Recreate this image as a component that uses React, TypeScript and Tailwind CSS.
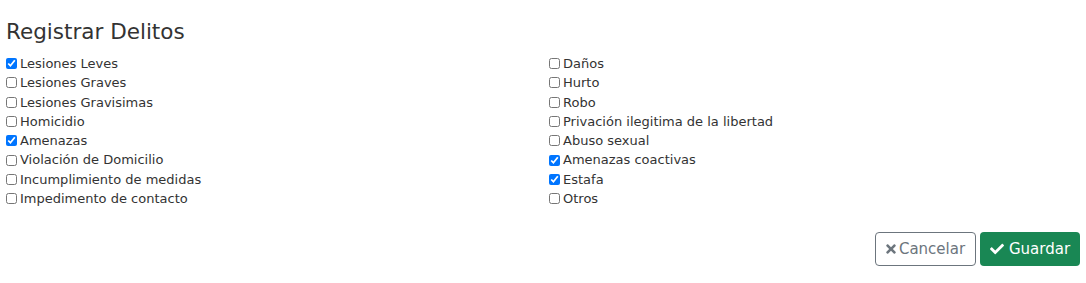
import React from "react";
import { FaTimes, FaCheck } from "react-icons/fa";

const left: [string, boolean][] = [
  ["Lesiones Leves", true],
  ["Lesiones Graves", false],
  ["Lesiones Gravisimas", false],
  ["Homicidio", false],
  ["Amenazas", true],
  ["Violación de Domicilio", false],
  ["Incumplimiento de medidas", false],
  ["Impedimento de contacto", false],
];
const right: [string, boolean][] = [
  ["Daños", false],
  ["Hurto", false],
  ["Robo", false],
  ["Privación ilegitima de la libertad", false],
  ["Abuso sexual", false],
  ["Amenazas coactivas", true],
  ["Estafa", true],
  ["Otros", false],
];

function Item({ label, checked }: { label: string; checked: boolean }) {
  return (
    <label className="flex items-center h-[19.3px]">
      <input
        type="checkbox"
        defaultChecked={checked}
        className="w-[11px] h-[11px] m-0 mr-[3px] accent-[#0075ff]"
      />
      <span>{label}</span>
    </label>
  );
}

export default function App() {
  return (
    <div
      className="w-[1086px] h-[283px] bg-white text-[#333] px-[6px]"
      style={{ fontFamily: '"DejaVu Sans", sans-serif' }}
    >
      <h4 className="text-[21.5px] leading-[28px] pt-[18px] text-[#333]">Registrar Delitos</h4>
      <div className="grid grid-cols-[543px_1fr] mt-[8px] text-[13px] text-[#333]">
        <div className="flex flex-col">
          {left.map(([l, c]) => (
            <Item key={l} label={l} checked={c} />
          ))}
        </div>
        <div className="flex flex-col">
          {right.map(([l, c]) => (
            <Item key={l} label={l} checked={c} />
          ))}
        </div>
      </div>
      <div className="flex justify-end gap-[4px] mt-[24px]">
        <button className="flex items-center justify-center gap-[3px] w-[101px] h-[34px] border border-[#6c757d] rounded-[4px] text-[#6c757d] text-[15px]">
          <FaTimes className="w-[10px] h-[14px]" />
          Cancelar
        </button>
        <button className="flex items-center justify-center gap-[5px] w-[100px] h-[34px] bg-[#198754] rounded-[4px] text-white text-[15px]">
          <FaCheck className="w-[14px] h-[14px]" />
          Guardar
        </button>
      </div>
    </div>
  );
}
